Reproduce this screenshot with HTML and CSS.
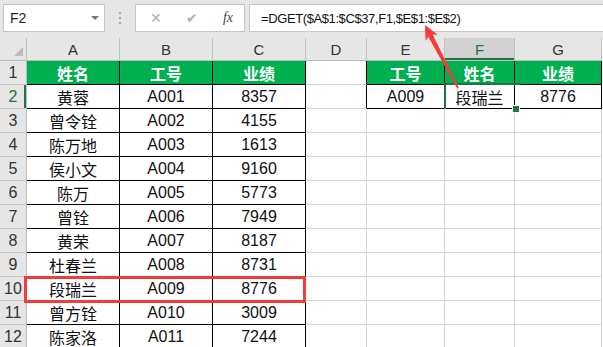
FILE: index.html
```html
<!DOCTYPE html>
<html lang="zh-CN">

<head>
    <meta charset="UTF-8">
    <title>DGET</title>
    <link rel="stylesheet" href="styles.css">
</head>

<body>

    <!-- formula bar -->
    <div class="toolbar">
        <div class="name-box">
            <span>F2</span>
            <span class="drop"></span>
        </div>
        <div class="dots"><i></i><i></i><i></i></div>
        <div class="fx-box">
            <span class="btn">&#x2715;</span>
            <span class="btn">&#x2714;</span>
            <span class="fx">fx</span>
        </div>
        <div class="formula">=DGET($A$1:$C$37,F1,$E$1:$E$2)</div>
    </div>

    <!-- sheet -->
    <div class="sheet">
        <div class="c col-hd corner"><span class="tri"></span></div>
        <div class="c col-hd">A</div>
        <div class="c col-hd">B</div>
        <div class="c col-hd">C</div>
        <div class="c col-hd">D</div>
        <div class="c col-hd">E</div>
        <div class="c col-hd active">F</div>
        <div class="c col-hd">G</div>

        <div class="c row-hd">1</div>
        <div class="c hd">姓名</div>
        <div class="c hd">工号</div>
        <div class="c hd">业绩</div>
        <div class="c edge"></div>
        <div class="c hd">工号</div>
        <div class="c hd">姓名</div>
        <div class="c hd">业绩</div>

        <div class="c row-hd active">2</div>
        <div class="c bk">黄蓉</div>
        <div class="c bk">A001</div>
        <div class="c bk">8357</div>
        <div class="c edge"></div>
        <div class="c bk">A009</div>
        <div class="c bk sel">段瑞兰</div>
        <div class="c bk">8776</div>

        <div class="c row-hd">3</div>
        <div class="c bk">曾令铨</div>
        <div class="c bk">A002</div>
        <div class="c bk">4155</div>
        <div class="c"></div><div class="c"></div><div class="c"></div><div class="c"></div>

        <div class="c row-hd">4</div>
        <div class="c bk">陈万地</div>
        <div class="c bk">A003</div>
        <div class="c bk">1613</div>
        <div class="c"></div><div class="c"></div><div class="c"></div><div class="c"></div>

        <div class="c row-hd">5</div>
        <div class="c bk">侯小文</div>
        <div class="c bk">A004</div>
        <div class="c bk">9160</div>
        <div class="c"></div><div class="c"></div><div class="c"></div><div class="c"></div>

        <div class="c row-hd">6</div>
        <div class="c bk">陈万</div>
        <div class="c bk">A005</div>
        <div class="c bk">5773</div>
        <div class="c"></div><div class="c"></div><div class="c"></div><div class="c"></div>

        <div class="c row-hd">7</div>
        <div class="c bk">曾铨</div>
        <div class="c bk">A006</div>
        <div class="c bk">7949</div>
        <div class="c"></div><div class="c"></div><div class="c"></div><div class="c"></div>

        <div class="c row-hd">8</div>
        <div class="c bk">黄荣</div>
        <div class="c bk">A007</div>
        <div class="c bk">8187</div>
        <div class="c"></div><div class="c"></div><div class="c"></div><div class="c"></div>

        <div class="c row-hd">9</div>
        <div class="c bk">杜春兰</div>
        <div class="c bk">A008</div>
        <div class="c bk">8731</div>
        <div class="c"></div><div class="c"></div><div class="c"></div><div class="c"></div>

        <div class="c row-hd">10</div>
        <div class="c bk">段瑞兰</div>
        <div class="c bk">A009</div>
        <div class="c bk">8776</div>
        <div class="c"></div><div class="c"></div><div class="c"></div><div class="c"></div>

        <div class="c row-hd">11</div>
        <div class="c bk">曾方铨</div>
        <div class="c bk">A010</div>
        <div class="c bk">3009</div>
        <div class="c"></div><div class="c"></div><div class="c"></div><div class="c"></div>

        <div class="c row-hd">12</div>
        <div class="c bk">陈家洛</div>
        <div class="c bk">A011</div>
        <div class="c bk">7244</div>
        <div class="c"></div><div class="c"></div><div class="c"></div><div class="c"></div>
    </div>

    <!-- annotations -->
    <div class="mark"></div>
    <svg class="arrow" width="603" height="347" viewBox="0 0 603 347">
        <polygon points="425,25 425.6,41 428.3,36.8 457.2,88.5 458.8,87.8 432.7,34.6 437.7,34.8" fill="#f53a3a" />
    </svg>

</body>

</html>
```

FILE: styles.css
```css
* {
    box-sizing: border-box;
}

body {
    margin: 0;
    width: 603px;
    height: 347px;
    overflow: hidden;
    position: relative;
    background-color: #fff;
    font-family: 'Liberation Sans', 'Noto Sans CJK SC', sans-serif;
    color: #000;
}

/* formula bar */
.toolbar {
    height: 38px;
    background-color: #e6e6e6;
    display: flex;
    align-items: flex-start;
    padding-top: 4px;
}

.name-box {
    margin-left: 3px;
    width: 102px;
    height: 28px;
    background-color: #fff;
    border: 1px solid #c6c6c6;
    display: flex;
    align-items: center;
    justify-content: space-between;
    padding: 0 5px 0 6px;
    font-size: 14px;
    color: #222;
}

.drop {
    width: 0;
    height: 0;
    border-left: 4px solid transparent;
    border-right: 4px solid transparent;
    border-top: 4px solid #777;
}

.dots {
    width: 30px;
    height: 28px;
    display: flex;
    flex-direction: column;
    align-items: center;
    justify-content: center;
    gap: 3px;
}

.dots i {
    width: 2px;
    height: 2px;
    background-color: #a8a8a8;
}

.fx-box {
    width: 110px;
    height: 28px;
    background-color: #fff;
    border: 1px solid #c6c6c6;
    display: flex;
    align-items: center;
    justify-content: space-between;
    padding: 0 11px 0 14px;
}

.btn {
    font-size: 14px;
    color: #b0b0b0;
}

.fx {
    font-family: 'Liberation Serif', serif;
    font-style: italic;
    font-size: 14px;
    color: #444;
}

.formula {
    margin-left: 4px;
    flex: 1;
    height: 28px;
    background-color: #fff;
    border: 1px solid #c6c6c6;
    border-right: none;
    display: flex;
    align-items: center;
    padding-left: 11px;
    font-size: 13px;
    letter-spacing: -0.4px;
    color: #111;
}

/* sheet */
.sheet {
    display: grid;
    grid-template-columns: 27px 93px 93px 93px 61px 78px 70px 87px;
    grid-template-rows: 23px repeat(12, 24px);
}

.c {
    border-right: 1px solid #d4d4d4;
    border-bottom: 1px solid #d4d4d4;
    display: flex;
    align-items: center;
    justify-content: center;
    font-size: 16px;
    background-color: #fff;
    position: relative;
}

.col-hd {
    background-color: #e6e6e6;
    border-right-color: #c2c2c2;
    border-bottom-color: #bdbdbd;
    font-size: 15px;
    color: #333;
}

.col-hd.active {
    background-color: #d2d2d2;
    color: #217346;
    box-shadow: inset 0 -2px 0 #217346;
}

.corner {
    justify-content: flex-end;
    align-items: flex-end;
    padding: 0 3px 4px 0;
}

.tri {
    width: 0;
    height: 0;
    border-left: 9px solid transparent;
    border-bottom: 9px solid #bdbdbd;
}

.row-hd {
    background-color: #e6e6e6;
    border-right-color: #bdbdbd;
    border-bottom-color: #c8c8c8;
    font-size: 16px;
    color: #333;
}

.row-hd.active {
    color: #217346;
    box-shadow: inset -2px 0 0 #217346;
}

.hd {
    background-color: #00b050;
    color: #fff;
    font-weight: bold;
    border-right-color: #000;
    border-bottom-color: #000;
}

.bk {
    border-right-color: #000;
    border-bottom-color: #000;
    color: #111;
}

.edge {
    border-right-color: #000;
}

.sel::after {
    content: "";
    position: absolute;
    left: -1px;
    top: -2px;
    width: 72px;
    height: 27px;
    border: 2px solid #217346;
}

.sel::before {
    content: "";
    position: absolute;
    left: 67px;
    top: 20px;
    width: 6px;
    height: 6px;
    background-color: #217346;
    border: 1px solid #fff;
    z-index: 1;
}

/* annotations */
.mark {
    position: absolute;
    left: 24px;
    top: 276px;
    width: 282px;
    height: 27px;
    border: 3px solid #f23c3c;
}

.arrow {
    position: absolute;
    left: 0;
    top: 0;
}
```
